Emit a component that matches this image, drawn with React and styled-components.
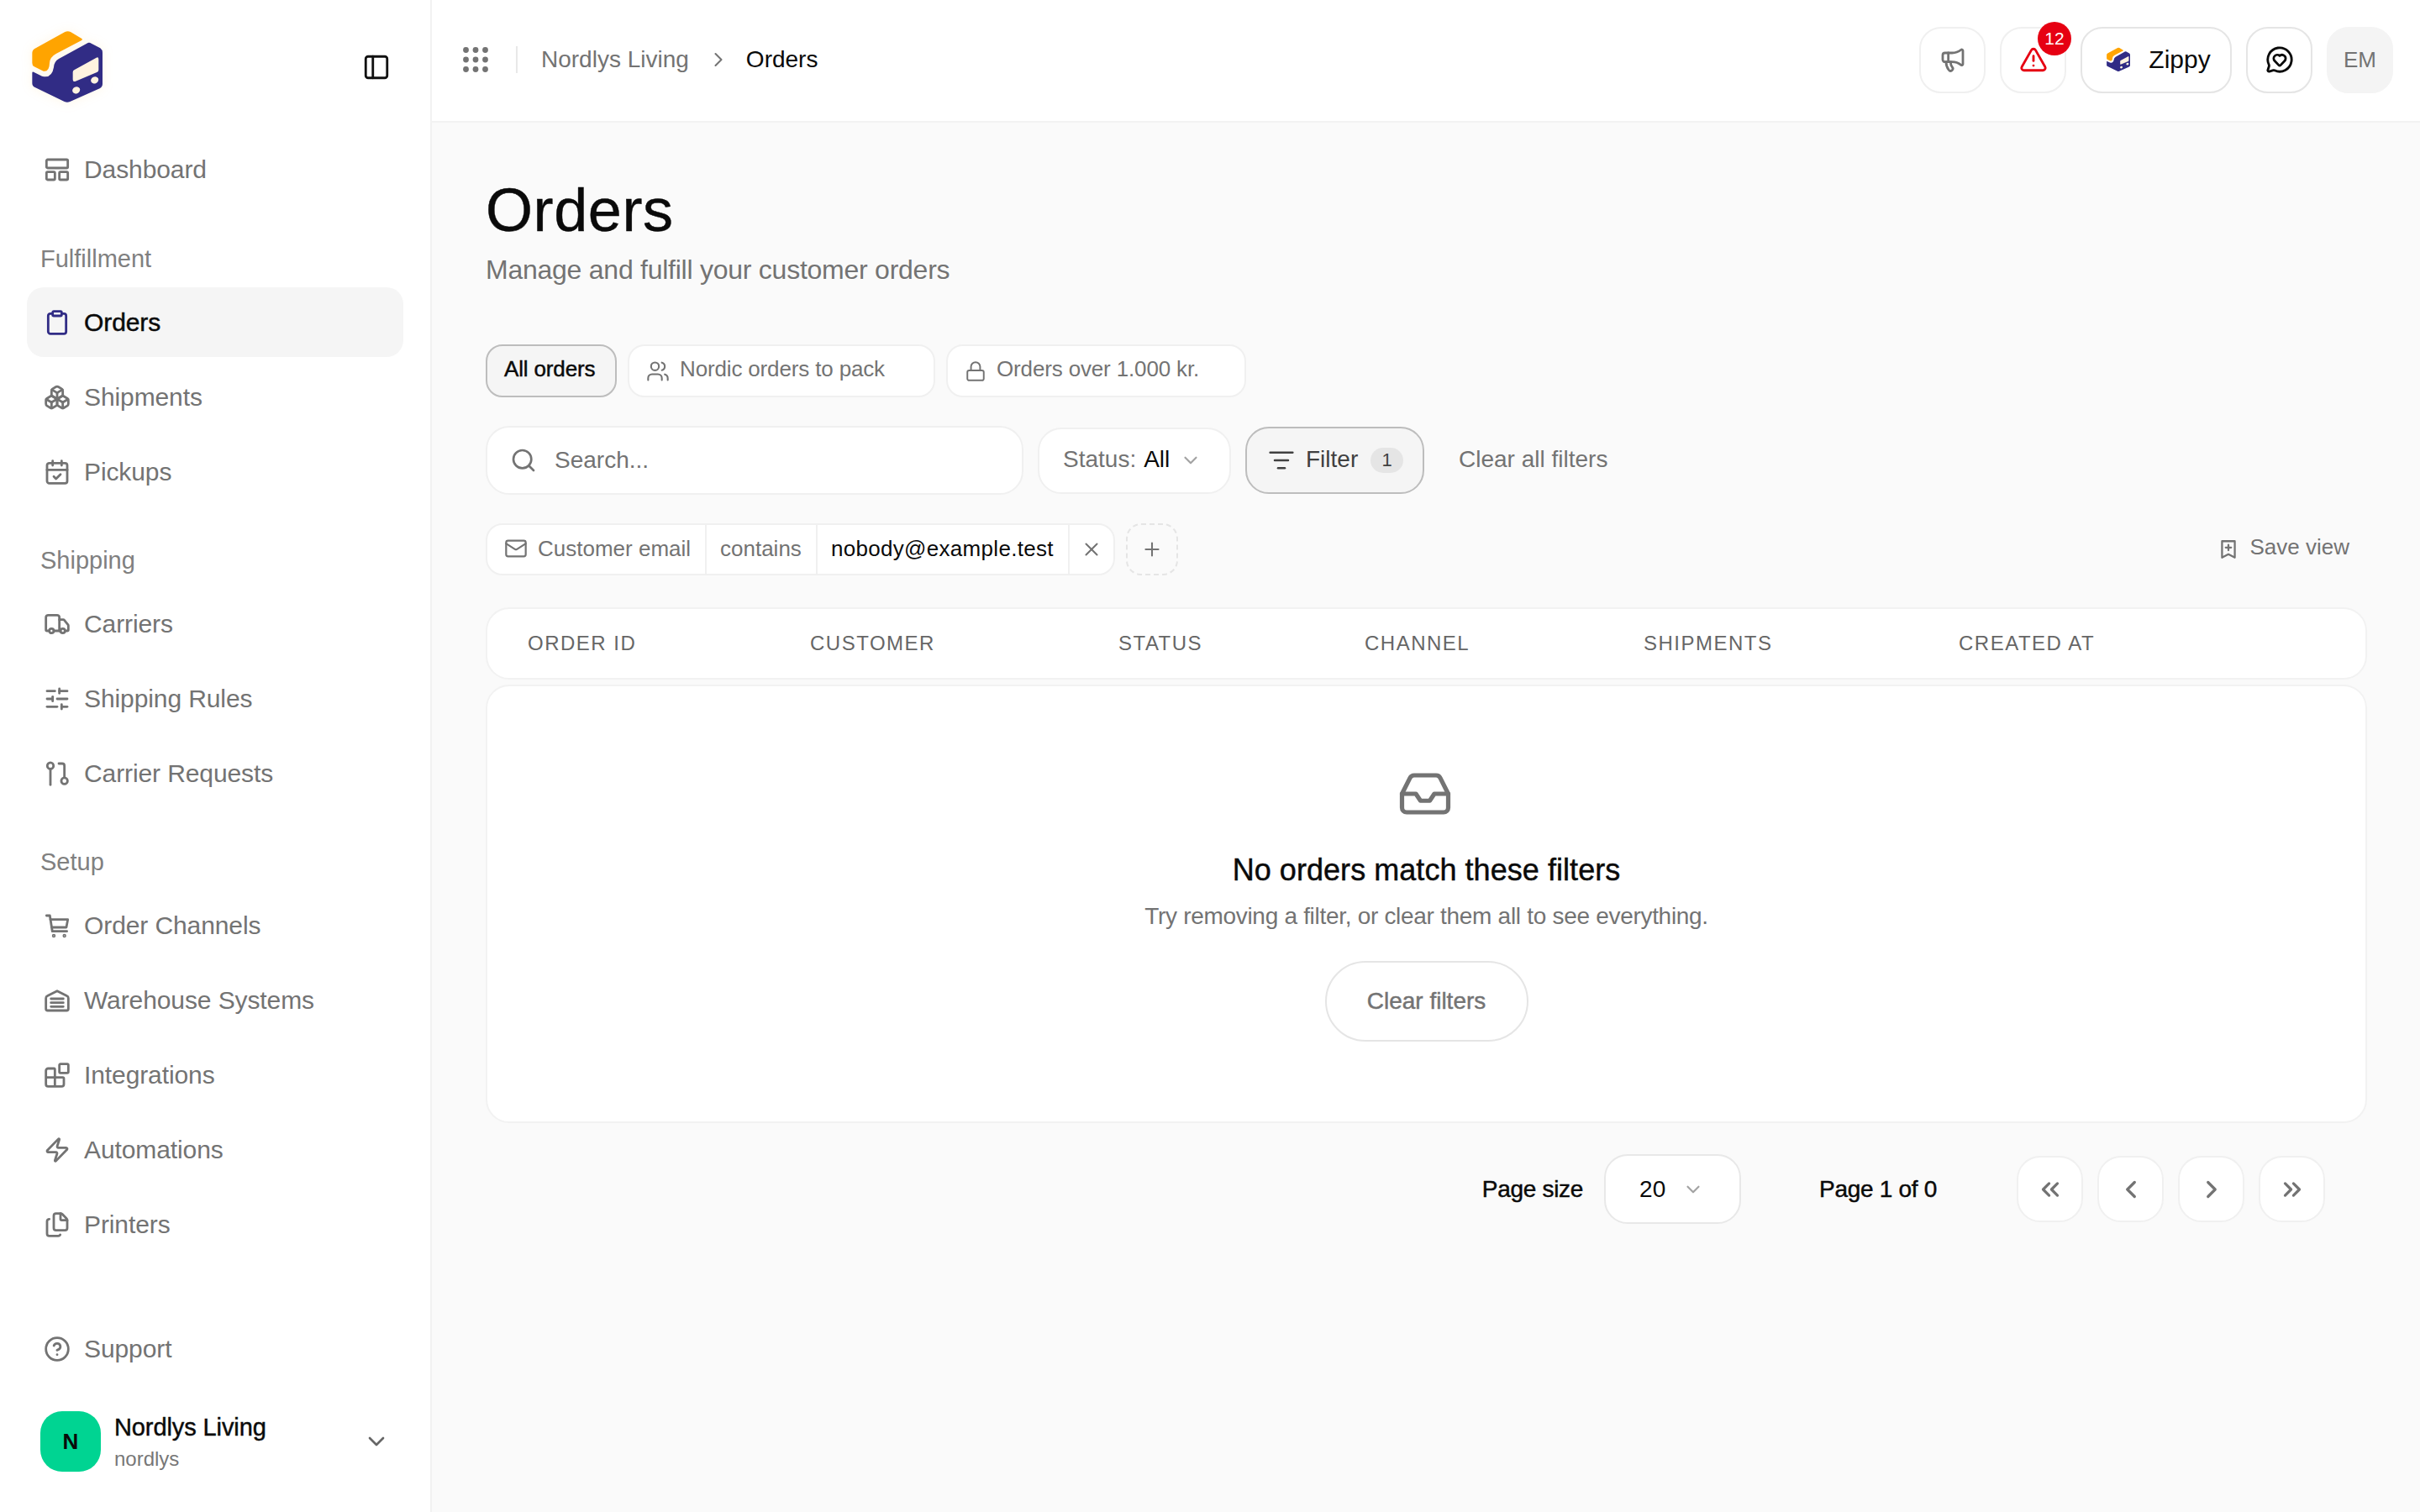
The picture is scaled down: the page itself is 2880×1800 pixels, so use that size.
import React from 'react';
import styled, { createGlobalStyle, css } from 'styled-components';
import {
  Blocks,
  Boxes,
  CalendarCheck,
  ChevronDown,
  ChevronLeft,
  ChevronRight,
  ChevronsLeft,
  ChevronsRight,
  CircleHelp,
  Clipboard,
  Files,
  Inbox,
  ListFilter,
  Lock,
  Mail,
  Megaphone,
  MessageCircleHeart,
  PanelLeft,
  Plus,
  Search,
  SlidersHorizontal,
  TriangleAlert,
  Truck,
  Users,
  X,
  Zap,
} from 'lucide-react';

const GlobalStyle = createGlobalStyle`
  html, body {
    margin: 0;
    padding: 0;
    background: #fafafa;
  }

  body {
    font-family: "Liberation Sans", Arial, sans-serif;
    color: #0a0a0a;
  }

  * {
    box-sizing: border-box;
  }
`;

const medium = css`
  -webkit-text-stroke: 0.45px currentColor;
`;

const Shell = styled.div`
  display: flex;
  height: 1800px;
  width: 2880px;
  overflow: hidden;
`;

const Sidebar = styled.aside`
  background: #fff;
  border-right: 2px solid #f2f2f2;
  display: flex;
  flex: 0 0 514px;
  flex-direction: column;
`;

const SidebarHead = styled.div`
  align-items: flex-start;
  display: flex;
  height: 160px;
  justify-content: space-between;
  padding: 20px 47px 0 20px;
`;

const LogoMark = styled.span`
  display: flex;
  filter: drop-shadow(0 0 7px rgba(255, 164, 0, 0.1));
`;

const CollapseButton = styled.span`
  color: #111;
  display: flex;
  margin-top: 43px;
`;

const NavGroup = styled.nav`
  display: flex;
  flex-direction: column;
  gap: 6px;
  padding: 0 32px;
`;

const NavSection = styled(NavGroup)`
  margin-top: 45px;

  & + & {
    margin-top: 44px;
  }
`;

const SectionLabel = styled.div`
  color: #808080;
  font-size: 29px;
  height: 40px;
  line-height: 40px;
  margin-bottom: 8px;
  padding-left: 16px;
`;

const NavItem = styled.a`
  align-items: center;
  background: ${props => (props.$active ? '#f5f5f5' : 'transparent')};
  border-radius: 20px;
  color: ${props => (props.$active ? '#0a0a0a' : '#737373')};
  display: flex;
  font-size: 30px;
  gap: 16px;
  height: 83px;
  letter-spacing: -0.1px;
  padding-left: 20px;
  ${props => props.$active && medium}

  svg {
    color: ${props => (props.$active ? '#312c85' : '#737373')};
    flex: none;
  }
`;

const SidebarFoot = styled.div`
  margin-top: auto;
`;

const AccountRow = styled.div`
  align-items: center;
  display: flex;
  gap: 16px;
  height: 72px;
  margin: 33px 0 48px;
  padding: 0 48px;

  > svg {
    color: #666;
    margin-left: auto;
  }
`;

const Avatar = styled.div`
  align-items: center;
  background: #00d492;
  border-radius: 26px;
  color: #0a0a0a;
  display: flex;
  font-size: 26px;
  font-weight: 700;
  height: 72px;
  justify-content: center;
  width: 72px;
`;

const AccountText = styled.div`
  display: flex;
  flex-direction: column;
  gap: 3px;
  padding-top: 2px;
`;

const AccountName = styled.div`
  color: #0a0a0a;
  font-size: 29px;
  letter-spacing: -0.1px;
  line-height: 36px;
  ${medium}
`;

const AccountHandle = styled.div`
  color: #777;
  font-size: 24px;
  line-height: 34px;
`;

const Main = styled.main`
  display: flex;
  flex: 1;
  flex-direction: column;
  min-width: 0;
`;

const TopBar = styled.header`
  align-items: center;
  background: #fff;
  border-bottom: 2px solid #f2f2f2;
  display: flex;
  flex: 0 0 146px;
  padding: 0 32px 2px 37px;
`;

const GridDots = styled.svg`
  color: #737373;
  flex: none;
`;

const BarDivider = styled.div`
  background: #e8e8e8;
  height: 32px;
  margin: 0 28px 0 33px;
  width: 2px;
`;

const Crumb = styled.span`
  color: ${props => (props.$current ? '#0a0a0a' : '#737373')};
  font-size: 28px;
`;

const CrumbArrow = styled.span`
  color: #737373;
  display: flex;
  margin: 0 19px 0 21px;
`;

const BarActions = styled.div`
  align-items: center;
  display: flex;
  gap: 17px;
  margin-left: auto;
`;

const BarButton = styled.button`
  align-items: center;
  background: ${props => (props.$fill ? '#f4f4f4' : '#fff')};
  border: 2px solid ${props => (props.$fill ? '#f4f4f4' : props.$strong ? '#e5e5e5' : '#f0f0f0')};
  border-radius: 26px;
  color: ${props => props.$tone || '#737373'};
  display: flex;
  font-family: inherit;
  font-size: 26px;
  height: 79px;
  justify-content: center;
  padding: 0;
  position: relative;
  width: 79px;
`;

const Badge = styled.span`
  align-items: center;
  background: #e60012;
  border-radius: 50%;
  color: #fff;
  display: flex;
  font-size: 21px;
  height: 40px;
  justify-content: center;
  position: absolute;
  right: -8px;
  top: -8px;
  width: 40px;
`;

const WorkspaceButton = styled(BarButton)`
  color: #0a0a0a;
  font-size: 30px;
  gap: 16px;
  width: 180px;
`;

const Content = styled.div`
  background: #fafafa;
  flex: 1;
  padding: 64px 63px 0 64px;
`;

const Title = styled.h1`
  font-size: 72px;
  font-weight: 400;
  height: 80px;
  letter-spacing: 0.6px;
  line-height: 80px;
  margin: 0;
  ${medium}
`;

const Subtitle = styled.p`
  color: #737373;
  font-size: 32px;
  letter-spacing: -0.25px;
  line-height: 44px;
  margin: 9px 0 0;
`;

const ViewTabs = styled.div`
  display: flex;
  gap: 13px;
  margin-top: 67px;
`;

const ViewTab = styled.button`
  align-items: center;
  background: ${props => (props.$active ? '#f5f5f5' : '#fff')};
  border: 2px solid ${props => (props.$active ? '#bdbdbd' : '#f0f0f0')};
  border-radius: 20px;
  color: ${props => (props.$active ? '#0a0a0a' : '#737373')};
  display: flex;
  font-family: inherit;
  font-size: 26px;
  gap: 12px;
  height: 63px;
  letter-spacing: -0.15px;
  padding: 0 20px;
  width: ${props => props.$width}px;
  ${props => props.$active && medium}
`;

const TabLabel = styled.span`
  margin-top: -4px;
`;

const Toolbar = styled.div`
  align-items: center;
  display: flex;
  margin-top: 34px;
`;

const SearchBox = styled.div`
  align-items: center;
  background: #fff;
  border: 2px solid #f0f0f0;
  border-radius: 28px;
  color: #737373;
  display: flex;
  font-size: 28px;
  gap: 21px;
  height: 82px;
  padding-left: 27px;
  width: 640px;
`;

const StatusSelect = styled.button`
  align-items: center;
  background: #fff;
  border: 2px solid #f0f0f0;
  border-radius: 28px;
  color: #737373;
  display: flex;
  font-family: inherit;
  font-size: 28px;
  height: 79px;
  margin-left: 17px;
  padding: 0 0 2px 28px;
  width: 230px;

  b {
    color: #0a0a0a;
    font-weight: 400;
    margin-left: 9px;
  }

  svg {
    color: #a3a3a3;
    margin-left: 12px;
    margin-top: 2px;
  }
`;

const FilterButton = styled.button`
  align-items: center;
  background: #f5f5f5;
  border: 2px solid #bdbdbd;
  border-radius: 28px;
  color: #404040;
  display: flex;
  font-family: inherit;
  font-size: 28px;
  gap: 13px;
  height: 80px;
  margin-left: 17px;
  padding: 0 0 2px 25px;
  width: 213px;

  svg {
    margin-top: 2px;
  }
`;

const CountPill = styled.span`
  align-items: center;
  background: #e5e5e5;
  border-radius: 15px;
  display: flex;
  font-size: 22px;
  height: 30px;
  justify-content: center;
  margin-left: 2px;
  margin-top: 2px;
  width: 39px;
`;

const TextAction = styled.button`
  background: none;
  border: 0;
  color: #737373;
  font-family: inherit;
  font-size: 28px;
  margin-left: 41px;
  padding: 0 0 2px;
`;

const ChipRow = styled.div`
  align-items: center;
  display: flex;
  margin-top: 34px;
`;

const FilterChip = styled.div`
  align-items: stretch;
  background: #fff;
  border: 2px solid #f0f0f0;
  border-radius: 20px;
  display: flex;
  font-size: 26px;
  height: 62px;
  width: 749px;
`;

const ChipPart = styled.span`
  align-items: center;
  border-right: ${props => (props.$last ? '0' : '2px solid #f0f0f0')};
  color: ${props => (props.$value ? '#0a0a0a' : '#737373')};
  display: flex;
  flex: ${props => (props.$last ? '1' : 'none')};
  gap: 12px;
  justify-content: ${props => (props.$last ? 'center' : 'flex-start')};
  letter-spacing: ${props => (props.$value ? '0.3px' : '0')};
  padding-bottom: ${props => (props.$last ? '0' : '2px')};
  padding-left: ${props => props.$pad}px;
  width: ${props => (props.$last ? 'auto' : `${props.$width}px`)};
`;

const AddChip = styled.button`
  align-items: center;
  background: none;
  border: 2px dashed #e5e5e5;
  border-radius: 18px;
  color: #737373;
  display: flex;
  height: 62px;
  justify-content: center;
  margin-left: 13px;
  padding: 0;
  width: 62px;
`;

const SaveView = styled.button`
  align-items: center;
  background: none;
  border: 0;
  color: #737373;
  display: flex;
  font-family: inherit;
  font-size: 26px;
  gap: 13px;
  margin-left: auto;
  margin-right: 21px;
  padding: 0 0 5px;

  svg {
    margin-top: 5px;
  }
`;

const TableHead = styled.div`
  align-items: center;
  background: #fff;
  border: 2px solid #f2f2f2;
  border-radius: 28px;
  display: grid;
  grid-template-columns: 336px 367px 293px 332px 375px 1fr;
  height: 86px;
  margin-top: 38px;
  padding-left: 48px;
`;

const HeadCell = styled.span`
  color: #666;
  font-size: 24px;
  letter-spacing: 1.5px;
`;

const EmptyCard = styled.section`
  align-items: center;
  background: #fff;
  border: 2px solid #f2f2f2;
  border-radius: 28px;
  display: flex;
  flex-direction: column;
  height: 522px;
  margin-top: 6px;
  padding-top: 95px;
`;

const EmptyIcon = styled.span`
  color: #737373;
  display: flex;
  margin-right: 3px;
`;

const EmptyTitle = styled.h2`
  font-size: 36px;
  font-weight: 400;
  letter-spacing: 0.05px;
  line-height: 48px;
  margin: 34px 0 0;
  ${medium}
`;

const EmptyText = styled.p`
  color: #737373;
  font-size: 28px;
  letter-spacing: -0.3px;
  line-height: 40px;
  margin: 11px 0 0;
`;

const ClearButton = styled.button`
  background: #fff;
  border: 2px solid #e5e5e5;
  border-radius: 48px;
  color: #737373;
  font-family: inherit;
  font-size: 28px;
  height: 96px;
  margin-top: 33px;
  padding: 0;
  width: 242px;
  ${medium}
`;

const Pagination = styled.div`
  align-items: center;
  display: flex;
  justify-content: flex-end;
  margin-top: 37px;
  padding-right: 50px;
`;

const PagerLabel = styled.span`
  font-size: 28px;
  letter-spacing: -0.3px;
  margin: ${props => props.$margin};
  ${medium}
`;

const SizeSelect = styled.button`
  align-items: center;
  background: #fff;
  border: 2px solid #e8e8e8;
  border-radius: 28px;
  color: #0a0a0a;
  display: flex;
  font-family: inherit;
  font-size: 28px;
  gap: 20px;
  height: 83px;
  padding: 0 0 0 40px;
  width: 163px;

  svg {
    color: #a3a3a3;
  }
`;

const PagerButtons = styled.div`
  display: flex;
  gap: 17px;
`;

const PagerButton = styled.button`
  align-items: center;
  background: #fff;
  border: 2px solid #f0f0f0;
  border-radius: 28px;
  color: #737373;
  display: flex;
  height: 79px;
  justify-content: center;
  padding: 0;
  width: 79px;
`;

const Logo = ({size}) => (
  <svg width={size} height={size} viewBox="0 0 360 360">
    <path
      d="M65 113 L172 54 Q182 50 192 54 L232 78 Q236 82 230 85 L140 132 Q118 144 117 165 Q116 198 95 194 L62 178 Q55 175 55 165 V130 Q55 118 65 113 Z"
      fill="#ffa400"
    />
    <path
      d="M55 200 Q55 195 60 197 L90 212 Q125 222 132 180 Q133 160 150 150 L250 95 Q258 90 266 95 L298 112 Q306 118 306 128 V240 Q306 250 296 256 L190 303 Q180 307 170 303 L65 252 Q55 248 55 238 Z"
      fill="#312c85"
    />
    <path
      d="M205 190 L284 146 Q292 142 292 152 V190 Q292 196 286 198 L210 230 Q200 234 200 224 V198 Q200 192 205 190 Z"
      fill="#fff3e0"
    />
    <ellipse cx="212" cy="262" rx="14" ry="12" fill="#fff3e0" transform="rotate(-25 212 262)" />
    <ellipse cx="278" cy="226" rx="14" ry="12" fill="#fff3e0" transform="rotate(-25 278 226)" />
  </svg>
);

const Glyph = ({size, children, width = 2.1}) => (
  <svg
    width={size}
    height={size}
    viewBox="0 0 24 24"
    fill="none"
    stroke="currentColor"
    strokeWidth={width}
    strokeLinecap="round"
    strokeLinejoin="round"
  >
    {children}
  </svg>
);

const DashboardGlyph = ({size}) => (
  <Glyph size={size}>
    <rect x="2.5" y="3" width="19" height="7.5" rx="1" />
    <rect x="2.5" y="14" width="7.5" height="7" rx="1" />
    <rect x="14" y="14" width="7.5" height="7" rx="1" />
  </Glyph>
);

const RequestGlyph = ({size}) => (
  <Glyph size={size}>
    <circle cx="6" cy="5" r="2.8" />
    <path d="M6 8v14" />
    <circle cx="18.5" cy="18.5" r="2.8" />
    <path d="M13.5 3h3a2 2 0 0 1 2 2v10.5" />
  </Glyph>
);

const CartGlyph = ({size}) => (
  <Glyph size={size}>
    <path d="M2.5 3h3l2.2 14h13" />
    <path d="M6 6.5h15.5l-1.3 7H7.2" />
    <circle cx="9" cy="21" r="0.6" />
    <circle cx="18.5" cy="21" r="0.6" />
  </Glyph>
);

const WarehouseGlyph = ({size}) => (
  <Glyph size={size}>
    <path d="M2 10c0-1 .5-1.700 1.400-2.100L12 3.500l8.600 4.400c.9.400 1.400 1.100 1.400 2.100v9.500a1.500 1.500 0 0 1-1.500 1.500h-17A1.500 1.500 0 0 1 2 19.500Z" />
    <path d="M6.500 10.500h11M6.500 14h11M6.500 17.500h11" />
  </Glyph>
);

const BookmarkPlusGlyph = ({size}) => (
  <Glyph size={size}>
    <path d="M5 3h14v18l-7-3.600L5 21Z" />
    <path d="M12 7v6M9 10h6" />
  </Glyph>
);

const NAV_ICON = 32;
const NAV_STROKE = 2.1;

const NAV_GROUPS = [
  {
    label: 'Fulfillment',
    items: [
      {label: 'Orders', icon: <Clipboard size={NAV_ICON} strokeWidth={NAV_STROKE} />, active: true},
      {label: 'Shipments', icon: <Boxes size={NAV_ICON} strokeWidth={NAV_STROKE} />},
      {label: 'Pickups', icon: <CalendarCheck size={NAV_ICON} strokeWidth={NAV_STROKE} />},
    ],
  },
  {
    label: 'Shipping',
    items: [
      {label: 'Carriers', icon: <Truck size={NAV_ICON} strokeWidth={NAV_STROKE} />},
      {label: 'Shipping Rules', icon: <SlidersHorizontal size={NAV_ICON} strokeWidth={NAV_STROKE} />},
      {label: 'Carrier Requests', icon: <RequestGlyph size={NAV_ICON} />},
    ],
  },
  {
    label: 'Setup',
    items: [
      {label: 'Order Channels', icon: <CartGlyph size={NAV_ICON} />},
      {label: 'Warehouse Systems', icon: <WarehouseGlyph size={NAV_ICON} />},
      {label: 'Integrations', icon: <Blocks size={NAV_ICON} strokeWidth={NAV_STROKE} />},
      {label: 'Automations', icon: <Zap size={NAV_ICON} strokeWidth={NAV_STROKE} />},
      {label: 'Printers', icon: <Files size={NAV_ICON} strokeWidth={NAV_STROKE} />},
    ],
  },
];

const COLUMNS = ['ORDER ID', 'CUSTOMER', 'STATUS', 'CHANNEL', 'SHIPMENTS', 'CREATED AT'];

const App = () => (
  <Shell>
    <GlobalStyle />
    <Sidebar>
      <SidebarHead>
        <LogoMark>
          <Logo size={120} />
        </LogoMark>
        <CollapseButton>
          <PanelLeft size={34} strokeWidth={2} />
        </CollapseButton>
      </SidebarHead>
      <NavGroup>
        <NavItem>
          <DashboardGlyph size={NAV_ICON} />
          Dashboard
        </NavItem>
      </NavGroup>
      {NAV_GROUPS.map(group => (
        <NavSection key={group.label}>
          <SectionLabel>{group.label}</SectionLabel>
          {group.items.map(item => (
            <NavItem key={item.label} $active={item.active}>
              {item.icon}
              {item.label}
            </NavItem>
          ))}
        </NavSection>
      ))}
      <SidebarFoot>
        <NavGroup>
          <NavItem>
            <CircleHelp size={NAV_ICON} strokeWidth={NAV_STROKE} />
            Support
          </NavItem>
        </NavGroup>
        <AccountRow>
          <Avatar>N</Avatar>
          <AccountText>
            <AccountName>Nordlys Living</AccountName>
            <AccountHandle>nordlys</AccountHandle>
          </AccountText>
          <ChevronDown size={32} strokeWidth={2} />
        </AccountRow>
      </SidebarFoot>
    </Sidebar>
    <Main>
      <TopBar>
        <GridDots width="30" height="30" viewBox="0 0 30 30" fill="currentColor">
          {[3.5, 15, 26.5].map(cy =>
            [3.5, 15, 26.5].map(cx => <circle key={`${cx}-${cy}`} cx={cx} cy={cy} r="3.4" />),
          )}
        </GridDots>
        <BarDivider />
        <Crumb>Nordlys Living</Crumb>
        <CrumbArrow>
          <ChevronRight size={28} strokeWidth={1.8} />
        </CrumbArrow>
        <Crumb $current>Orders</Crumb>
        <BarActions>
          <BarButton>
            <Megaphone size={32} strokeWidth={2.1} />
          </BarButton>
          <BarButton $tone="#e60012">
            <TriangleAlert size={34} strokeWidth={2} />
            <Badge>12</Badge>
          </BarButton>
          <WorkspaceButton $strong>
            <Logo size={40} />
            Zippy
          </WorkspaceButton>
          <BarButton $strong $tone="#0a0a0a">
            <MessageCircleHeart size={34} strokeWidth={2} />
          </BarButton>
          <BarButton $fill>EM</BarButton>
        </BarActions>
      </TopBar>
      <Content>
        <Title>Orders</Title>
        <Subtitle>Manage and fulfill your customer orders</Subtitle>
        <ViewTabs>
          <ViewTab $active $width={156}><TabLabel>All orders</TabLabel></ViewTab>
          <ViewTab $width={366}>
            <Users size={28} strokeWidth={1.8} />
            <TabLabel>Nordic orders to pack</TabLabel>
          </ViewTab>
          <ViewTab $width={357}>
            <Lock size={26} strokeWidth={1.8} />
            <TabLabel>Orders over 1.000 kr.</TabLabel>
          </ViewTab>
        </ViewTabs>
        <Toolbar>
          <SearchBox>
            <Search size={32} strokeWidth={2} />
            Search...
          </SearchBox>
          <StatusSelect>
            Status:<b>All</b>
            <ChevronDown size={26} strokeWidth={2} />
          </StatusSelect>
          <FilterButton>
            <ListFilter size={32} strokeWidth={1.9} />
            Filter
            <CountPill>1</CountPill>
          </FilterButton>
          <TextAction>Clear all filters</TextAction>
        </Toolbar>
        <ChipRow>
          <FilterChip>
            <ChipPart $pad={20} $width={261}>
              <Mail size={28} strokeWidth={1.9} />
              Customer email
            </ChipPart>
            <ChipPart $pad={16} $width={132}>contains</ChipPart>
            <ChipPart $value $pad={16} $width={300}>nobody@example.test</ChipPart>
            <ChipPart $last>
              <X size={26} strokeWidth={1.9} />
            </ChipPart>
          </FilterChip>
          <AddChip>
            <Plus size={26} strokeWidth={1.9} />
          </AddChip>
          <SaveView>
            <BookmarkPlusGlyph size={26} />
            Save view
          </SaveView>
        </ChipRow>
        <TableHead>
          {COLUMNS.map(column => (
            <HeadCell key={column}>{column}</HeadCell>
          ))}
        </TableHead>
        <EmptyCard>
          <EmptyIcon>
            <Inbox size={66} strokeWidth={1.9} />
          </EmptyIcon>
          <EmptyTitle>No orders match these filters</EmptyTitle>
          <EmptyText>Try removing a filter, or clear them all to see everything.</EmptyText>
          <ClearButton>Clear filters</ClearButton>
        </EmptyCard>
        <Pagination>
          <PagerLabel $margin="0 25px 0 0">Page size</PagerLabel>
          <SizeSelect>
            20
            <ChevronDown size={26} strokeWidth={2} />
          </SizeSelect>
          <PagerLabel $margin="0 95px 0 93px">Page 1 of 0</PagerLabel>
          <PagerButtons>
            <PagerButton><ChevronsLeft size={34} strokeWidth={2.3} /></PagerButton>
            <PagerButton><ChevronLeft size={34} strokeWidth={2.3} /></PagerButton>
            <PagerButton><ChevronRight size={34} strokeWidth={2.3} /></PagerButton>
            <PagerButton><ChevronsRight size={34} strokeWidth={2.3} /></PagerButton>
          </PagerButtons>
        </Pagination>
      </Content>
    </Main>
  </Shell>
);

export default App;
